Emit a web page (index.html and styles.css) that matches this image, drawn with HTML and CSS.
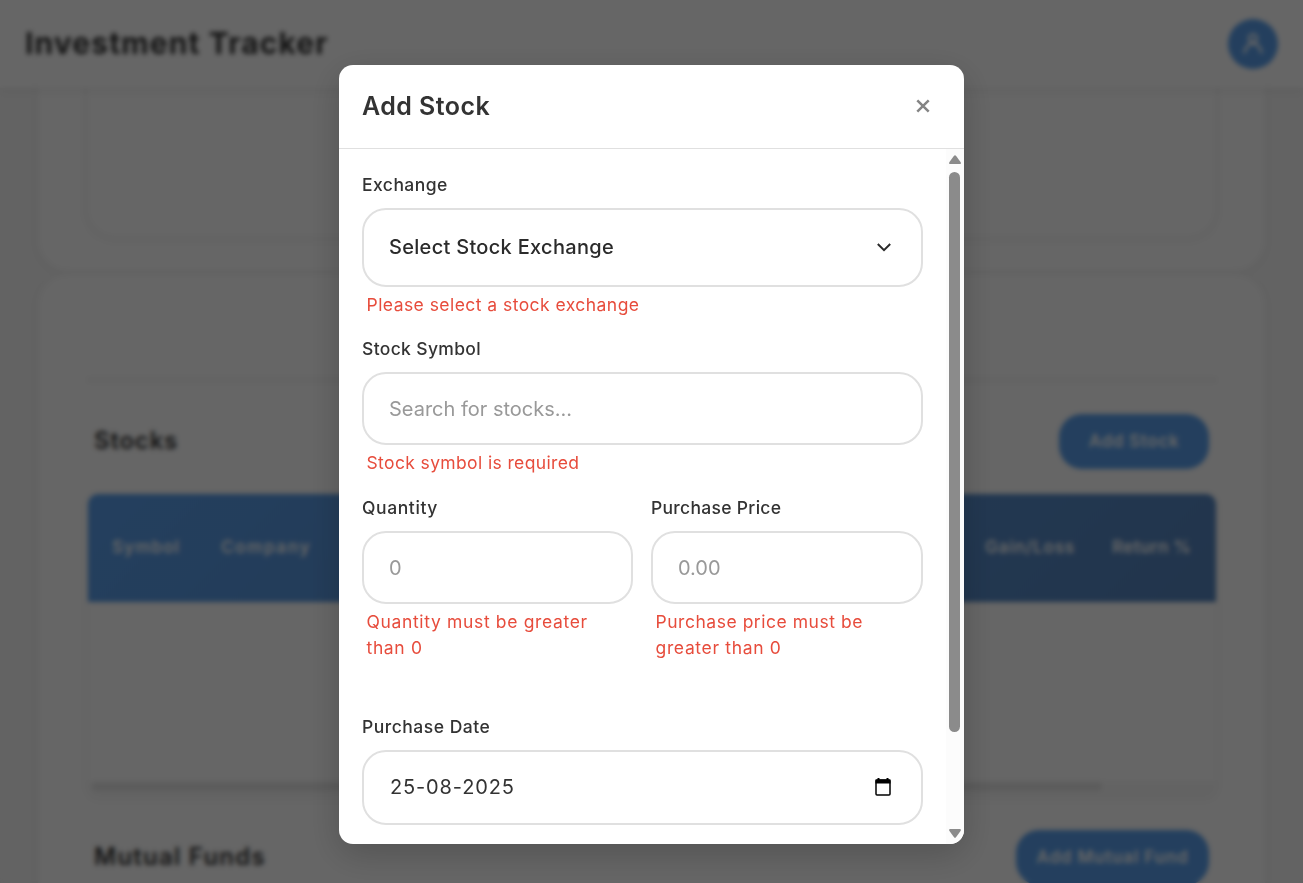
FILE: index.html
```html
<!DOCTYPE html>
<html lang="en">
<head>
<meta charset="utf-8">
<title>Investment Tracker</title>
<link rel="stylesheet" href="styles.css">
</head>
<body>
<div class="page">
  <header class="topbar">
    <h1 class="brand">Investment Tracker</h1>
    <div class="avatar">
      <svg width="24" height="24" viewBox="0 0 24 24" fill="none" stroke="#fff" stroke-width="2.400" stroke-linecap="round"><circle cx="12" cy="6.500" r="4"/><path d="M3.500 20.500c1.500-6 4.500-9 8.500-9s7 3 8.500 9"/></svg>
    </div>
  </header>
  <main class="content">
    <section class="panel panel-top"><div class="summary"></div></section>
    <section class="panel panel-holdings">
      <div class="divider"></div>
      <div class="row">
        <h2 class="row-title">Stocks</h2>
        <button class="btn btn-stock">Add Stock</button>
      </div>
      <div class="table">
        <div class="thead">
          <span class="th-symbol">Symbol</span>
          <span class="th-company">Company</span>
          <span class="th-gain">Gain/Loss</span>
          <span class="th-return">Return %</span>
        </div>
        <div class="tbody"></div>
        <div class="hscroll"><div class="hthumb"></div></div>
      </div>
      <div class="row row-funds">
        <h2 class="row-title title-funds">Mutual Funds</h2>
        <button class="btn btn-fund">Add Mutual Fund</button>
      </div>
    </section>
  </main>
</div>

<div class="overlay">
  <div class="modal">
    <div class="modal-header">
      <h2 class="modal-title">Add Stock</h2>
      <svg class="close" width="14" height="14" viewBox="0 0 14 14" fill="none" stroke="#858585" stroke-width="2.500"><path d="M1.300 1.300l11.400 11.400M12.700 1.300L1.300 12.700"/></svg>
    </div>
    <div class="modal-body">
      <form class="form">
        <div class="field">
          <label class="label t-exchange">Exchange</label>
          <div class="control select"><span class="t-select">Select Stock Exchange</span>
            <svg class="chevron" width="16" height="10" viewBox="0 0 16 10" fill="none" stroke="#2b2b2b" stroke-width="2"><path d="M1.800 2l6.200 6.200L14.200 2"/></svg>
          </div>
          <p class="error t-e1">Please select a stock exchange</p>
        </div>
        <div class="field">
          <label class="label t-symbol">Stock Symbol</label>
          <div class="control hint">Search for stocks...</div>
          <p class="error t-e2">Stock symbol is required</p>
        </div>
        <div class="pair">
          <div class="field">
            <label class="label t-qty">Quantity</label>
            <div class="control hint">0</div>
            <p class="error t-e3">Quantity must be greater<br>than 0</p>
          </div>
          <div class="field">
            <label class="label t-price">Purchase Price</label>
            <div class="control hint">0.00</div>
            <p class="error t-e4">Purchase price must be<br><span class="t-e5">greater than 0</span></p>
          </div>
        </div>
        <div class="field">
          <label class="label t-date">Purchase Date</label>
          <div class="control date"><span class="t-day">25-08-2025</span>
            <svg width="16" height="18" viewBox="0 0 16 18"><rect x="1" y="2" width="14" height="15" rx="1" fill="none" stroke="#000" stroke-width="1.500"/><path d="M.5 1.500h15v4H.5zM2.500 0h2v2h-2zM11.500 0h2v2h-2z"/></svg>
          </div>
        </div>
      </form>
      <div class="vscroll">
        <svg width="12" height="9" viewBox="0 0 12 9" fill="#8b8b8b"><path d="M5 .8Q6-.5 7 .8l4.700 6.500Q12.300 9 10.800 9H1.200Q-.3 9 .3 7.300z"/></svg>
        <div class="vthumb"></div>
        <svg class="down" width="12" height="9" viewBox="0 0 12 9" fill="#8b8b8b"><path d="M5 8.200q1 1.300 2 0l4.700-6.500Q12.300 0 10.800 0H1.200Q-.3 0 .3 1.700z"/></svg>
      </div>
    </div>
  </div>
</div>
</body>
</html>
```
FILE: styles.css
```css
* { box-sizing: border-box; }
html, body { margin: 0; height: 100%; overflow: hidden; }
body { font-family: Inter, "Open Sans", sans-serif; color: #333; background: #f7f7f7; }
h1, h2, p { margin: 0; }

/* Page behind the dialog */
.page { height: 883px; overflow: hidden; }
.topbar {
  position: fixed; top: 0; left: 0; right: 0; z-index: 2;
  height: 88px; padding: 0 25px;
  display: flex; align-items: center; justify-content: space-between;
  background: rgba(255, 255, 255, 0.9);
  box-shadow: 0 2px 8px rgba(0, 0, 0, 0.07);
}
.brand { font-size: 30px; font-weight: 700; letter-spacing: 1.100px; color: #333; margin-top: -2px; }
.avatar {
  width: 50px; height: 50px; border-radius: 50%; background: #5a9fec;
  display: flex; align-items: center; justify-content: center;
}
.content { padding: 0 37px; }
.panel { background: #fefefe; border: 1px solid #f2f2f2; box-shadow: 0 2px 8px rgba(0, 0, 0, 0.03); }
.panel-top { height: 272px; padding: 8px 47px 0; border-radius: 0 0 32px 32px; border-top: 0; }
.summary { height: 231px; border: 2px solid #f4f4f4; border-radius: 30px; box-shadow: 0 2px 6px rgba(0, 0, 0, 0.03); }
.panel-holdings { margin-top: 1px; height: 680px; padding: 105px 49px 0 50px; border-radius: 32px 32px 0 0; }
.divider { height: 2px; background: #ececec; }
.row { display: flex; align-items: center; justify-content: space-between; padding: 0 7px 0 6px; margin-top: 33px; }
.row-title { font-size: 24px; font-weight: 600; letter-spacing: 0.800px; margin-top: -2px; }
.title-funds { letter-spacing: 1.250px; }
.btn {
  height: 55px; padding: 0 0 1px; border: 0; border-radius: 23px; background: #5a9fec; color: #fff;
  font: 600 17px Inter, sans-serif; letter-spacing: 0.700px;
}
.btn-stock { width: 150px; }
.btn-fund { width: 193px; letter-spacing: 0.840px; }
.table { margin-top: 25px; height: 302px; border-radius: 10px 10px 12px 12px; overflow: hidden; display: flex; flex-direction: column; box-shadow: 0 2px 8px rgba(0, 0, 0, 0.05); }
.row-funds { margin-top: 34px; }
.thead {
  height: 108px; padding: 0 25px 2px 24px; display: flex; align-items: center;
  background: linear-gradient(135deg, #5a9fec, #5584bd); color: #fff;
  font-size: 17px; font-weight: 600;
}
.th-symbol { width: 109px; letter-spacing: 1.040px; }
.th-company { letter-spacing: 1.590px; }
.th-gain { margin-left: auto; width: 127px; letter-spacing: 0.840px; }
.th-return { width: 79px; letter-spacing: 0.370px; white-space: nowrap; }
.tbody { flex: 1; }
.hscroll { height: 14px; padding: 0 4px; background: #f8f8f8; }
.hthumb { width: 1010px; height: 9px; border-radius: 4px; background: #e6e6e6; }

/* Dialog */
.overlay {
  position: fixed; inset: 0; z-index: 5; padding-top: 65px;
  display: flex; justify-content: center; align-items: flex-start;
  background: rgba(0, 0, 0, 0.6);
  -webkit-backdrop-filter: blur(2.500px);
  backdrop-filter: blur(2.500px);
}
.modal {
  width: 625px; height: 779px; border-radius: 14px; background: #fff; overflow: hidden;
  display: flex; flex-direction: column;
  box-shadow: 0 10px 35px rgba(0, 0, 0, 0.2);
}
.modal-header {
  height: 84px; padding: 0 34px 2px 23px; border-bottom: 1px solid #e0e0e0;
  display: flex; align-items: center; justify-content: space-between;
}
.modal-title { font-size: 25px; font-weight: 600; letter-spacing: 0.430px; }
.modal-body { flex: 1; min-height: 0; display: flex; }
.form { flex: 1; padding: 23px 23px 0 23px; }
.field { display: flex; flex-direction: column; margin-bottom: 18px; }
.label { height: 36px; line-height: 26px; font-size: 17.500px; font-weight: 500; }
.control {
  height: 73px; padding: 0 24px 0 25px; border: 2px solid #e0e0e0; border-radius: 24px;
  display: flex; align-items: center; font-size: 20px;
}
.hint { color: #999; }
.select { height: 79px; padding-right: 29px; padding-bottom: 1px; justify-content: space-between; font-weight: 500; color: #2b2b2b; }
.date { height: 75px; padding: 0 30px 1px 26px; justify-content: space-between; }
.error { margin-top: 5px; padding-left: 4.500px; line-height: 26px; font-size: 17.500px; color: #e74c3c; white-space: nowrap; }
.pair { display: grid; grid-template-columns: 271px 272px; column-gap: 18px; margin: 19px 0 35px; }
.t-exchange { letter-spacing: 0.450px; }
.t-symbol { letter-spacing: 0.340px; }
.t-qty { letter-spacing: 0.600px; }
.t-price { letter-spacing: 0.300px; }
.t-date { letter-spacing: 0.500px; }
.t-select { letter-spacing: 0.300px; }
.t-day { letter-spacing: 0.850px; }
.t-e1 { letter-spacing: 0.450px; }
.t-e2 { letter-spacing: 0.370px; }
.t-e3 { letter-spacing: 0.650px; }
.t-e4 { letter-spacing: 0.530px; }
.t-e5 { letter-spacing: 0.660px; }

.vscroll { width: 18px; padding: 6px 0 6px 3px; background: #fcfcfc; display: flex; flex-direction: column; align-items: flex-start; }
.vthumb { width: 11px; height: 560px; margin-top: 8px; border-radius: 6px; background: #8b8b8b; flex: none; }
.down { margin-top: auto; }
```
